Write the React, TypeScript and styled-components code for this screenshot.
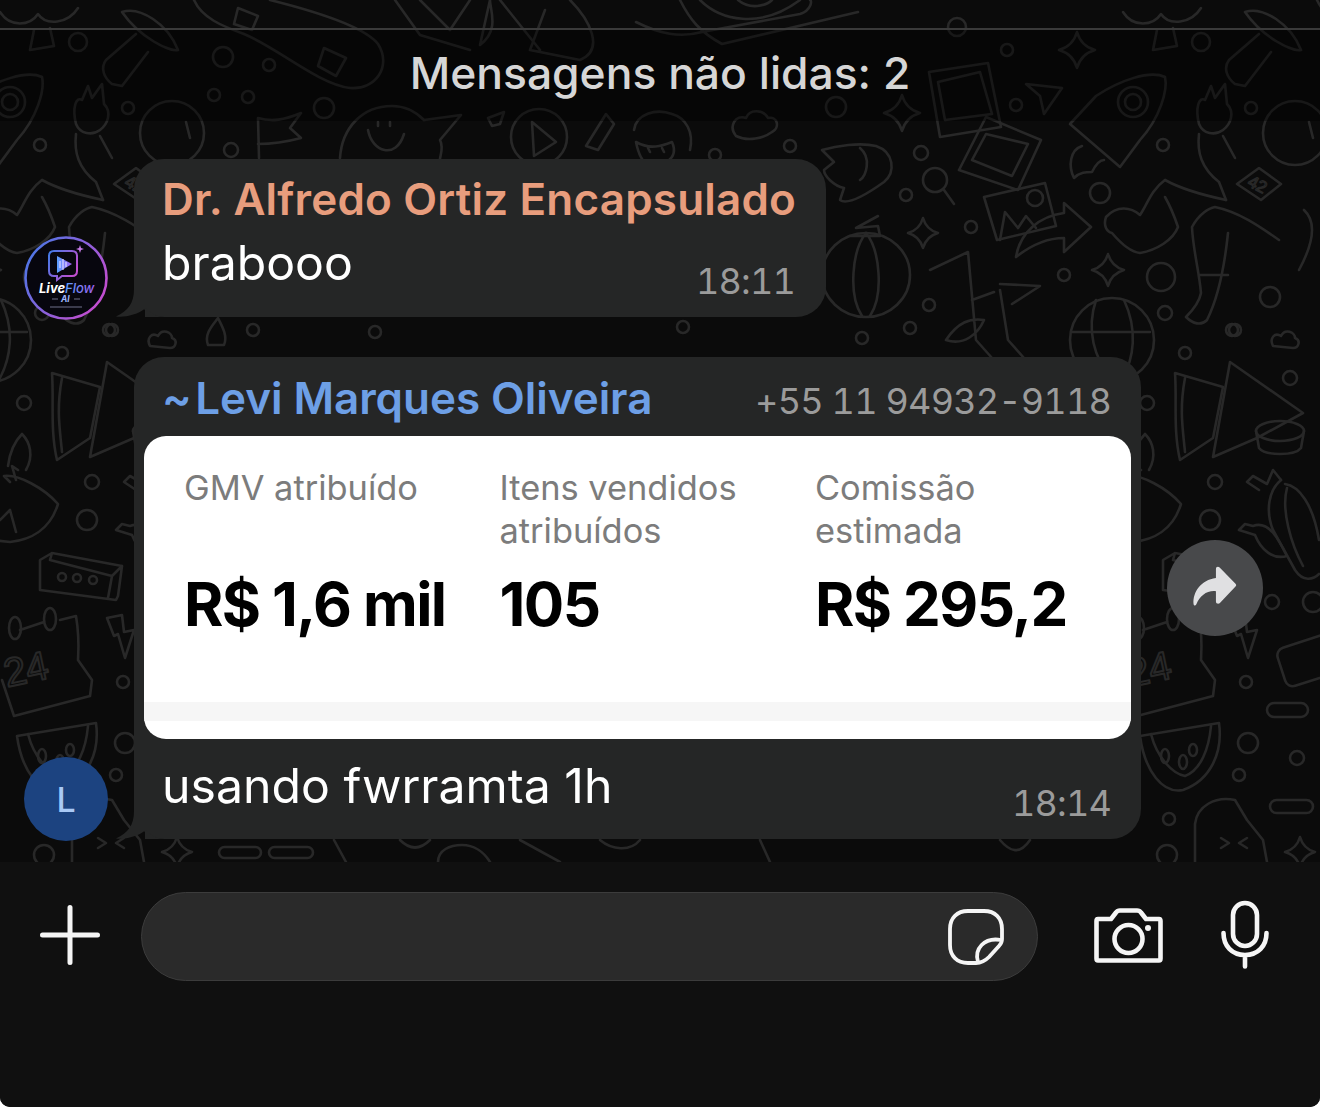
import styled, { createGlobalStyle } from "styled-components";

const Global = createGlobalStyle`
  html, body { margin: 0; padding: 0; background: #fff; }
  * { box-sizing: border-box; }
`;

const SF = `Inter, "Noto Sans", "Liberation Sans", sans-serif`;

const Screen = styled.div`
  position: relative;
  width: 1320px;
  height: 1107px;
  overflow: hidden;
  display: flex;
  flex-direction: column;
  background: #0b0b0b;
  border-radius: 0 0 10px 10px;
  font-family: ${SF};
`;

// wallpaper sits under everything
const Wallpaper = styled.svg`
  position: absolute;
  top: 0;
  left: 0;
  fill: none;
  stroke: #282828;
  stroke-width: 2.6;
  stroke-linecap: round;
  stroke-linejoin: round;
`;

const WallText = styled.text<{ $line: number }>`
  font-family: "Liberation Sans", sans-serif;
  font-weight: 400;
  stroke-width: ${(p) => p.$line};
`;

const TopStrip = styled.div`
  position: relative;
  height: 30px;
  flex: none;
  border-bottom: 2px solid #3a3a3a;
`;

const UnreadBanner = styled.div`
  position: relative;
  height: 91px;
  flex: none;
  display: flex;
  align-items: center;
  justify-content: center;
  padding-bottom: 5px;
  background: rgba(0, 0, 0, 0.38);
  color: #d6d6d6;
  font-size: 44.4px;
  font-weight: 500;
`;

const MessageList = styled.div`
  position: relative;
  flex: 1;
  display: flex;
  flex-direction: column;
  gap: 40px;
  padding: 38px 0 0 24px;
`;

const Row = styled.div`
  display: flex;
  align-items: flex-end;
  gap: 26px;
`;

const AvatarWrap = styled.div<{ $lift: number }>`
  width: 84px;
  height: 84px;
  flex: none;
  margin-bottom: ${(p) => p.$lift}px;
`;

const LetterAvatar = styled(AvatarWrap)`
  display: flex;
  align-items: center;
  justify-content: center;
  border-radius: 50%;
  background: #1c4380;
  color: #a9c9f5;
  font-size: 34px;
  font-weight: 500;
`;

const Bubble = styled.div<{ $width: number; $height: number }>`
  position: relative;
  width: ${(p) => p.$width}px;
  height: ${(p) => p.$height}px;
  background: #252626;
  border-radius: 30px;
`;

const Tail = styled.svg`
  position: absolute;
  left: -19px;
  bottom: 0;
  fill: #252626;
`;

const Sender = styled.div<{ $color: string }>`
  color: ${(p) => p.$color};
  font-size: 44px;
  font-weight: 600;
  letter-spacing: 0.18px;
  white-space: nowrap;
`;

const TextBubbleBody = styled.div`
  display: flex;
  flex-direction: column;
  padding: 13px 31px 0 28px;
`;

const MessageText = styled.div`
  color: #fff;
  font-size: 48.2px;
  line-height: 64px;
  font-weight: 400;
  white-space: nowrap;
`;

const Time = styled.span`
  color: #9b9b9b;
  font-size: 36px;
  line-height: 44px;
  letter-spacing: -0.8px;
  font-variant-numeric: tabular-nums;
`;

const InlineTime = styled(Time)`
  margin-bottom: -8px;
`;

const InlineFoot = styled.div`
  display: flex;
  align-items: flex-end;
  justify-content: space-between;
  margin-top: 5px;
`;

const MediaHead = styled.div`
  height: 79px;
  display: flex;
  align-items: center;
  justify-content: space-between;
  padding: 2px 30px 0 28px;
`;

const TildeName = styled(Sender)`
  letter-spacing: -0.05px;
`;

const Phone = styled.span`
  color: #9b9b9b;
  font-size: 36px;
  letter-spacing: -0.8px;
  padding-top: 6px;
  font-variant-numeric: tabular-nums;
`;

const Card = styled.div`
  position: relative;
  height: 303px;
  margin: 0 10px;
  background: #fff;
  border-radius: 22px;
  overflow: hidden;
  display: grid;
  grid-template-columns: repeat(3, 315.5px);
  padding: 30px 0 0 40px;
`;

const CardFooter = styled.div`
  position: absolute;
  left: 0;
  right: 0;
  bottom: 18px;
  height: 19px;
  background: #f6f6f6;
`;

const Stat = styled.div`
  display: flex;
  flex-direction: column;
`;

const StatLabel = styled.div`
  height: 86px;
  color: #7c7c7c;
  font-size: 34.4px;
  line-height: 43px;
  white-space: pre-line;
`;

const StatValue = styled.div`
  margin-top: 16px;
  color: #000;
  font-size: 60px;
  line-height: 72px;
  font-weight: 700;
  white-space: nowrap;
  letter-spacing: -1.6px;
`;

const MediaFoot = styled.div`
  height: 100px;
  display: flex;
  justify-content: space-between;
  padding: 15px 30px 0 28px;
`;

const FootTime = styled(Time)`
  align-self: flex-end;
  padding-bottom: 14px;
`;

const ForwardButton = styled.div`
  width: 96px;
  height: 96px;
  flex: none;
  align-self: flex-start;
  margin: 183px 0 0 0;
  padding-bottom: 3px;
  border-radius: 50%;
  background: #48494b;
  display: flex;
  align-items: center;
  justify-content: center;
`;

const Composer = styled.div`
  position: relative;
  height: 245px;
  flex: none;
  background: #101010;
  padding: 30px 0 0 40px;
`;

const ComposerRow = styled.div`
  display: flex;
  align-items: center;
  height: 89px;
`;

const InputPill = styled.div`
  width: 897px;
  height: 89px;
  margin-left: 41px;
  display: flex;
  align-items: center;
  justify-content: flex-end;
  padding-right: 33px;
  background: #2a2a2a;
  border: 1px solid #3c3c3c;
  border-radius: 45px;
`;

const ToolIcon = styled.svg<{ $gap?: number; $up?: number }>`
  flex: none;
  margin-left: ${(p) => p.$gap ?? 0}px;
  margin-bottom: ${(p) => p.$up ?? 0}px;
  fill: none;
  stroke: #f5f5f5;
  stroke-linecap: round;
  stroke-linejoin: round;
`;

const rings: [number, number, number][] = [
  [78, 42, 9], [223, 57, 10], [269, 65, 6], [214, 95, 6], [248, 97, 6], [324, 108, 10], [128, 108, 6],
  [40, 145, 6], [231, 150, 7], [957, 27, 9], [1007, 50, 6],
  [836, 107, 10], [790, 146, 6], [715, 155, 6], [921, 153, 7], [1016, 105, 6], [971, 227, 6], [906, 195, 6],
  [24, 403, 7], [92, 482, 7], [87, 520, 10], [123, 682, 6], [62, 353, 6], [167, 378, 7], [149, 602, 7], [190, 602, 10],
  [125, 743, 10], [174, 758, 7], [116, 775, 6], [46, 819, 6], [44, 855, 10],
  [112, 330, 6], [253, 330, 6], [375, 332, 6], [683, 327, 6], [862, 338, 6], [910, 328, 6], [929, 305, 6],
  [1100, 193, 10], [1064, 275, 6], [38, 277, 14], [147, 297, 10], [42, 313, 7], [109, 330, 6],
];

const stars: [number, number, number][] = [
  [902, 113, 18], [1077, 50, 18], [923, 233, 15], [1108, 270, 16], [177, 852, 15],
];

function Star({ x, y, r }: { x: number; y: number; r: number }) {
  const c = r * 0.22;
  return (
    <path
      d={`M${x} ${y - r}Q${x + c} ${y - c} ${x + r} ${y}Q${x + c} ${y + c} ${x} ${y + r}Q${x - c} ${y + c} ${x - r} ${y}Q${x - c} ${y - c} ${x} ${y - r}Z`}
    />
  );
}

function DoodleTile() {
  return (
    <g id="tile">
      {rings.map(([cx, cy, r], i) => (
        <circle key={i} cx={cx} cy={cy} r={r} />
      ))}
      {stars.map(([x, y, r], i) => (
        <Star key={i} x={x} y={y} r={r} />
      ))}
      {/* mushroom */}
      <path d="M122 12C140 6 168 24 178 50C170 52 140 38 122 12Z" />
      <path d="M136 34L106 60C100 68 104 78 112 84L122 86L148 52" />
      {/* palm */}
      <path d="M0 12C10 28 30 26 38 14C46 26 68 24 78 8M34 30L30 50L54 46L50 28" />
      {/* skateboard */}
      <path d="M194 0C202 18 222 26 244 34C278 48 318 84 350 88C376 90 392 66 378 44C364 26 310 10 270 0" />
      <path d="M238 8L258 16L252 30L234 24ZM324 48L346 58L336 76L318 66Z" />
      {/* hand and astronaut */}
      <path d="M76 124C72 108 76 96 82 100L88 86L92 98L102 84L104 104C112 112 108 124 100 130C92 136 80 134 76 124Z" />
      <path d="M76 134C74 152 78 168 96 182L103 200M100 136L112 158" />
      <circle cx="172" cy="133" r="32" />
      <path d="M186 122L190 138" />
      <path d="M114 184L136 168L158 184L138 200Z" />
      <WallText $line={1.2} x="125" y="191" fontSize="17" transform="rotate(28 136 185)">42</WallText>
      {/* leg and shoe */}
      <path d="M42 180C28 190 24 205 17 215C8 207 -6 205 -17 217C-20 226 -16 232 -11 233C0 246 8 252 17 253C34 250 50 240 55 227C50 212 46 204 42 197" />
      <path d="M42 180C60 190 84 196 103 200M69 227C70 250 76 270 78 293C76 304 68 312 63 317C70 324 78 326 84 320C96 296 102 262 105 233M69 227C76 214 86 208 92 207C116 212 136 226 156 240M76 275H105M181 210C194 222 190 244 176 270" />
      {/* flag */}
      <path d="M258 118L259 158M258 118C272 122 284 120 301 113L290 128L301 138C286 142 272 144 258 144" />
      {/* smiley with hat */}
      <path d="M340 158C342 128 362 106 392 106C404 106 414 110 424 120L461 115L440 140C444 148 440 156 440 159" />
      <path d="M368 130C372 152 396 160 404 134M378 122L378 126M390 122L390 126" />
      {/* play circle */}
      <circle cx="539" cy="137" r="28" />
      <path d="M532 122L534 156L556 142Z" />
      <path d="M488 118L504 112L500 124L492 126Z" />
      <path d="M586 146L606 114L614 124L598 150Z" />
      {/* head */}
      <path d="M634 130C636 114 656 108 672 114C686 118 694 132 690 150M636 142C650 150 662 146 672 142C680 160 660 168 648 164C642 162 638 152 636 142ZM648 148L650 152M662 148L664 152" />
      {/* laptop strip */}
      <path d="M636 22C660 34 680 38 702 32L800 14C812 10 812 0 810 0M680 0C690 20 700 32 722 44L858 12" />
      <path d="M395 0L420 35L470 50M420 0L450 30L470 0M490 0L480 45C500 30 490 10 490 0" />
      <path d="M500 0L540 50M545 10L530 50L580 60C605 50 590 20 570 0" />
      <path d="M700 0C720 20 760 30 800 0M738 0C750 10 766 6 772 0" />
      {/* cloud */}
      <path d="M736 136C728 126 736 114 746 118C750 108 764 110 768 118C778 116 780 128 772 132C764 138 748 142 736 136Z" />
      {/* polaroids */}
      <path d="M929 72L988 63L1001 127L940 137Z" />
      <path d="M938 82L980 72L992 114L945 120Z" />
      <path d="M986 117L1041 140L1018 190L959 170Z" />
      <path d="M986 134L1028 144L1012 176L972 160Z" />
      <path d="M984 197L1045 183L1056 226L997 240Z" />
      <circle cx="1035" cy="198" r="8" />
      <path d="M1000 240L1005 212L1018 228L1026 216L1036 228" />
      {/* arrow */}
      <path d="M1016 257C1020 232 1040 216 1064 213L1064 203L1091 227L1064 252L1064 238C1046 238 1030 246 1016 257Z" />
      {/* plane */}
      <path d="M1026 84L1062 88L1044 114L1040 96Z" />
      {/* rocket */}
      <path d="M1165 77C1168 90 1160 118 1140 140L1120 167L1070 124L1096 96C1120 80 1150 70 1165 77Z" />
      <circle cx="1133" cy="102" r="15" />
      <circle cx="1133" cy="102" r="8" />
      <path d="M1082 146C1070 150 1068 166 1074 178C1080 172 1086 172 1092 172C1096 164 1100 160 1104 160" />
      {/* fish */}
      <path d="M822 150C836 146 860 142 876 146C894 152 896 172 884 182C870 192 848 206 840 200L844 188C834 186 824 176 824 170L834 162Z" />
      <path d="M860 148C872 158 866 176 860 180" />
      {/* lantern */}
      <ellipse cx="866" cy="275" rx="44" ry="42" />
      <path d="M866 233C852 250 848 295 862 316M866 233C880 250 884 295 870 316M850 236L880 236L878 226L856 228L878 216" />
      {/* magnifier */}
      <circle cx="935" cy="180" r="12" />
      <path d="M944 190L954 204" />
      {/* plant */}
      <path d="M930 270L968 252L976 340L992 358M972 300L994 292M1000 290L1008 340L1024 358M1000 284L1040 286L1012 304M946 340C958 322 970 318 984 320C978 334 964 346 946 340Z" />
      {/* globe */}
      <circle cx="1112" cy="340" r="42" />
      <path d="M1072 332L1150 332M1096 300C1086 330 1094 358 1112 380M1124 300C1138 330 1134 358 1122 380" />
      {/* cone */}
      <path d="M52 373L100 387L90 438L57 460C50 430 54 400 52 373ZM62 378C56 410 60 430 62 452" />
      <path d="M107 362L180 413L134 438L90 457L107 362Z" />
      {/* bowl */}
      <ellipse cx="157" cy="431" rx="24" ry="10" />
      <path d="M133 431L136 448C142 456 172 456 178 448L181 431" />
      {/* lamp */}
      <path d="M8 466C10 450 16 440 22 434C30 442 34 456 26 470" />
      <path d="M10 482L4 476C18 474 44 488 58 504C50 530 30 540 10 542L-8 540" />
      <path d="M18 470L12 466L16 480M0 520L10 510L16 532" />
      {/* box */}
      <path d="M40 560L52 553L122 566L118 596L116 600L40 590ZM52 553L50 560L112 576L122 566M112 576L108 598" />
      <circle cx="62" cy="577" r="4" />
      <circle cx="77" cy="578" r="4" />
      <circle cx="93" cy="580" r="4" />
      {/* calendar */}
      <path d="M20 630L44 622M60 620L76 616C80 640 78 656 78 660L92 680L90 696L14 716L2 680" />
      <ellipse cx="15" cy="628" rx="6" ry="11" />
      <ellipse cx="50" cy="619" rx="6" ry="11" />
      <WallText $line={2} x="4" y="682" fontSize="40" transform="rotate(-12 30 670)">24</WallText>
      {/* lightning */}
      <path d="M107 618L122 615L124 632L134 630L125 658L118 634L114 636Z" />
      {/* cactus */}
      <path d="M158 480C146 490 142 510 150 530L172 570C180 582 190 580 196 574" />
      <path d="M162 484C176 486 190 504 196 540" />
      <path d="M164 488C158 510 168 544 180 566" />
      <path d="M136 490L124 482L130 476L144 484L150 470L158 480" />
      <path d="M132 535L116 530L122 524L130 526C146 520 156 540 164 556C150 560 138 550 132 535Z" />
      {/* rounded rect */}
      <rect x="157" y="640" width="60" height="40" rx="8" transform="rotate(-18 187 660)" />
      {/* pills */}
      <rect x="144" y="703" width="41" height="14" rx="7" />
      <rect x="219" y="847" width="42" height="11" rx="5.5" />
      <rect x="269" y="847" width="44" height="11" rx="5.5" />
      <rect x="147" y="800" width="43" height="13" rx="6.5" />
      {/* watermelon */}
      <path d="M17 736L96 723C100 752 88 780 60 790C40 794 22 772 17 736Z" />
      <path d="M28 734C34 758 50 774 62 776C78 770 86 748 88 726" />
      <ellipse cx="42" cy="756" rx="4" ry="7" />
      <ellipse cx="60" cy="762" rx="4" ry="7" />
      <ellipse cx="70" cy="750" rx="4" ry="6" />
      {/* popsicle */}
      <path d="M72 862L72 824C74 806 92 796 112 800L124 820L140 840L144 862" />
      <path d="M98 838L106 843L98 848M124 838L116 843L124 848" />
      {/* bottom scraps */}
      <path d="M334 840L346 862M400 840C410 850 420 850 430 840M438 862C438 850 450 845 462 845C474 845 484 852 490 862" />
      <path d="M208 345C204 334 212 326 218 318C222 326 228 336 224 345Z" />
      <path d="M150 346C146 338 152 332 158 336C162 328 172 332 172 338C178 340 176 348 170 348Z" />
      <path d="M520 840L560 862M600 840C612 850 630 852 640 840M760 840L770 862M1000 840C1010 852 1020 855 1030 840" />
    </g>
  );
}

function LiveFlowLogo() {
  return (
    <AvatarWrap as="svg" $lift={-3} viewBox="0 0 84 84">
      <defs>
        <linearGradient id="ring" x1="0" y1="0" x2="1" y2="0.6">
          <stop offset="0" stopColor="#3f7be8" />
          <stop offset="1" stopColor="#c04ed0" />
        </linearGradient>
        <linearGradient id="word" x1="0" y1="0" x2="1" y2="0">
          <stop offset="0" stopColor="#5aa0ff" />
          <stop offset="1" stopColor="#a060f0" />
        </linearGradient>
      </defs>
      <circle cx="42" cy="42" r="40.5" fill="#07060e" stroke="url(#ring)" strokeWidth="2.6" />
      <path
        d="M30 15H48C51 15 53 17 53 20V35C53 38 51 40 48 40H38L33 44V40H30C27 40 25 38 25 35V20C25 17 27 15 30 15Z"
        fill="none"
        stroke="url(#ring)"
        strokeWidth="2"
      />
      <path d="M33 20L48 28L33 37Z" fill="url(#word)" />
      <path d="M36 25V32M39 23V34M42 26V31" stroke="#e6dcff" strokeWidth="1.1" />
      <path d="M56 9L57 12L60 13L57 14L56 17L55 14L52 13L55 12Z" fill="#c77be8" />
      <text x="15" y="57" fontSize="13" fontWeight="700" fontStyle="italic" fill="#fff" fontFamily="Inter, sans-serif">Live</text>
      <text x="41" y="57" fontSize="13" fontWeight="500" fontStyle="italic" fill="url(#word)" fontFamily="Inter, sans-serif">Flow</text>
      <text x="37" y="66" fontSize="8.5" fontWeight="700" fontStyle="italic" fill="#9fb8ff" fontFamily="Inter, sans-serif">AI</text>
      <path d="M28 63H34M50 63H56M26 71H58" stroke="#7d7d9a" strokeWidth="0.9" />
    </AvatarWrap>
  );
}

function BubbleTail() {
  return (
    <Tail width="60" height="40" viewBox="0 0 60 40">
      <path d="M19 0V12C19 26 13 34 1 39.5C10 40.500 22 38 31 31C36 36 42 40 50 40H30V0Z" />
    </Tail>
  );
}

export default function App() {
  return (
    <Screen>
      <Global />
      <Wallpaper width="1320" height="862" viewBox="0 0 1320 862">
        <defs>
          <DoodleTile />
        </defs>
        <use href="#tile" x="0" />
        <use href="#tile" x="1123" />
        <use href="#tile" x="-1123" />
      </Wallpaper>
      <TopStrip />
      <UnreadBanner>Mensagens não lidas: 2</UnreadBanner>
      <MessageList>
        <Row>
          <LiveFlowLogo />
          <Bubble $width={692} $height={158}>
            <BubbleTail />
            <TextBubbleBody>
              <Sender $color="#e89d7d">Dr. Alfredo Ortiz Encapsulado</Sender>
              <InlineFoot>
                <MessageText>brabooo</MessageText>
                <InlineTime>18:11</InlineTime>
              </InlineFoot>
            </TextBubbleBody>
          </Bubble>
        </Row>
        <Row>
          <LetterAvatar $lift={-2}>L</LetterAvatar>
          <Bubble $width={1007} $height={482}>
            <BubbleTail />
            <MediaHead>
              <TildeName $color="#6d9fe6">~{"\u200A"}Levi Marques Oliveira</TildeName>
              <Phone>+55 11 94932-9118</Phone>
            </MediaHead>
            <Card>
              <Stat>
                <StatLabel>GMV atribuído</StatLabel>
                <StatValue>R$ 1,6 mil</StatValue>
              </Stat>
              <Stat>
                <StatLabel>{"Itens vendidos\natribuídos"}</StatLabel>
                <StatValue>105</StatValue>
              </Stat>
              <Stat>
                <StatLabel>{"Comissão\nestimada"}</StatLabel>
                <StatValue>R$ 295,2</StatValue>
              </Stat>
              <CardFooter />
            </Card>
            <MediaFoot>
              <MessageText>usando fwrramta 1h</MessageText>
              <FootTime>18:14</FootTime>
            </MediaFoot>
          </Bubble>
          <ForwardButton>
            <svg width="46" height="41" viewBox="0 0 48 44">
              <path
                d="M1 41C0 28 9 15 25 13L25 3C25 1 27 0 29 1.500L46 19C47 20 47 21 46 22L29 40C27 41 25 40 25 38L25 27C15 26 8 32 4 41C3 43 1.500 43 1 41Z"
                fill="#e0e0e2"
              />
            </svg>
          </ForwardButton>
        </Row>
      </MessageList>
      <Composer>
        <ComposerRow>
          <ToolIcon $up={3} width="60" height="60" viewBox="0 0 60 60" strokeWidth="5">
            <path d="M30 2.500V57.500M2.500 30H57.500" />
          </ToolIcon>
          <InputPill>
            <ToolIcon width="56" height="56" viewBox="0 0 56 56" strokeWidth="3.800">
              <path d="M20 2H36C47 2 54 9 54 20V30C54 33 53 35 51 37L41 48C37 52 33 54 28 54H20C9 54 2 47 2 36V20C2 9 9 2 20 2Z" />
              <path d="M30 53C26 40 36 28 53 31" />
            </ToolIcon>
          </InputPill>
          <ToolIcon $gap={56} $up={3} width="69" height="55" viewBox="0 0 69 55" strokeWidth="4.600">
            <path d="M4 11H17L22 4.500C23 3 24.500 2.500 26 2.500H43C44.500 2.500 46 3 47 4.500L52 11H65C66 11 66.500 12 66.500 13V50.500C66.500 51.500 66 52.500 65 52.500H4C3 52.500 2.500 51.500 2.500 50.500V13C2.500 12 3 11 4 11Z" />
            <circle cx="34.500" cy="31" r="14" />
            <circle cx="54" cy="20" r="3" fill="#f5f5f5" stroke="none" />
          </ToolIcon>
          <ToolIcon $gap={58} $up={5} width="48" height="69" viewBox="0 0 48 69" strokeWidth="4.600">
            <rect x="12" y="3" width="24" height="43" rx="12" />
            <path d="M2.500 33C2.500 46 11 55 24 55C37 55 45.500 46 45.500 33M24 55V66.500" />
          </ToolIcon>
        </ComposerRow>
      </Composer>
    </Screen>
  );
}
